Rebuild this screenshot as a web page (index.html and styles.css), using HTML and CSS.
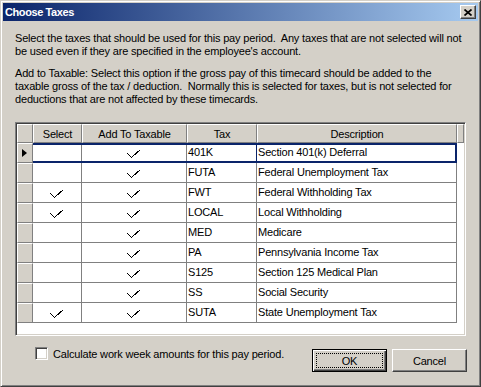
FILE: index.html
```html
<!DOCTYPE html>
<html lang="en">
<head>
    <meta charset="UTF-8">
    <title>Choose Taxes</title>
    <link rel="stylesheet" href="styles.css">
</head>
<body>
    <div class="window">
        <div class="titlebar">
            <span class="title">Choose Taxes</span>
            <span class="close">
                <svg width="8" height="7" viewBox="0 0 8 7"><path d="M0.5 0.5 L7.5 6.5 M7.5 0.5 L0.5 6.5" stroke="#000" stroke-width="1.7" fill="none"/></svg>
            </span>
        </div>
        <div class="content">
            <p class="intro">Select the taxes that should be used for this pay period.&nbsp; Any taxes that are not selected will not<br>be used even if they are specified in the employee's account.</p>
            <p class="intro second">Add to Taxable: Select this option if the gross pay of this timecard should be added to the<br>taxable gross of the tax / deduction.&nbsp; Normally this is selected for taxes, but is not selected for<br>deductions that are not affected by these timecards.</p>

            <div class="grid" id="grid">
                <div class="row head">
                    <div class="ind"></div>
                    <div class="hcell">Select</div>
                    <div class="hcell">Add To Taxable</div>
                    <div class="hcell">Tax</div>
                    <div class="hcell">Description</div>
                    <div class="hcell stub"></div>
                </div>
            </div>

            <div class="footer">
                <label class="option"><span class="box"></span>Calculate work week amounts for this pay period.</label>
                <div class="buttons">
                    <button class="btn default">OK</button>
                    <button class="btn">Cancel</button>
                </div>
            </div>
        </div>
    </div>

    <script>
        const taxes = [
            ['401K', 'Section 401(k) Deferral', false, true],
            ['FUTA', 'Federal Unemployment Tax', false, true],
            ['FWT', 'Federal Withholding Tax', true, true],
            ['LOCAL', 'Local Withholding', true, true],
            ['MED', 'Medicare', false, true],
            ['PA', 'Pennsylvania Income Tax', false, true],
            ['S125', 'Section 125 Medical Plan', false, true],
            ['SS', 'Social Security', false, true],
            ['SUTA', 'State Unemployment Tax', true, true]
        ];

        const check = '<svg width="14" height="9" viewBox="0 0 14 9" shape-rendering="crispEdges"><polyline points="0.5,4.5 4.5,8.5 13.5,0.5" fill="none" stroke="#000" stroke-width="1"/></svg>';

        let html = '';
        taxes.forEach((t, i) => {
            html += `<div class="row${i === 0 ? ' current' : ''}">
                        <div class="ind"></div>
                        <div class="cell mark">${t[2] ? check : ''}</div>
                        <div class="cell mark">${t[3] ? check : ''}</div>
                        <div class="cell code">${t[0]}</div>
                        <div class="cell">${t[1]}</div>
                        <div class="rest"></div>
                     </div>`;
        });
        document.getElementById('grid').insertAdjacentHTML('beforeend', html);
    </script>
</body>
</html>
```

FILE: styles.css
```css
body {
    margin: 0;
    font-family: "Liberation Sans", Arial, sans-serif;
    font-size: 11px;
    letter-spacing: -0.18px;
    color: #000;
}

.window {
    width: 481px;
    height: 387px;
    box-sizing: border-box;
    background-color: #d4d0c8;
    border: 1px solid;
    border-color: #d4d0c8 #404040 #404040 #d4d0c8;
    box-shadow: inset 1px 1px #fff, inset -1px -1px #808080;
    padding: 2px;
}

.titlebar {
    height: 18px;
    display: flex;
    align-items: center;
    justify-content: space-between;
    padding: 0 2px;
    background: linear-gradient(to right, #0a246a, #a6caf0);
}

.title {
    color: #fff;
    font-weight: bold;
    letter-spacing: -0.4px;
}

.close {
    width: 16px;
    height: 14px;
    box-sizing: border-box;
    display: flex;
    align-items: center;
    justify-content: center;
    background-color: #d4d0c8;
    border: 1px solid;
    border-color: #fff #404040 #404040 #fff;
    box-shadow: inset -1px -1px #808080;
}

.content {
    padding: 0 11px 0 12px;
}

.intro {
    margin: 11px 0 0;
    line-height: 13px;
    white-space: nowrap;
}

.intro.second {
    margin-top: 9px;
}

/* grid */

.grid {
    width: 451px;
    height: 214px;
    box-sizing: border-box;
    margin-top: 16px;
    padding: 1px;
    background-color: #fff;
    border: 1px solid;
    border-color: #808080 #fff #fff #808080;
    box-shadow: inset 1px 1px #404040, inset -1px -1px #d4d0c8;
}

.row {
    display: grid;
    grid-template-columns: 16px 49px 105px 70px 200px 1fr;
    height: 20px;
}

.row.head {
    height: 19px;
}

.ind, .hcell {
    box-sizing: border-box;
    background-color: #d4d0c8;
    border: 1px solid;
    border-color: #fff #808080 #808080 #fff;
}

.hcell {
    display: flex;
    align-items: center;
    justify-content: center;
}

.cell {
    box-sizing: border-box;
    display: flex;
    align-items: center;
    padding: 0 0 2px 1px;
    border-right: 1px solid #808080;
    border-bottom: 1px solid #808080;
    white-space: nowrap;
    overflow: hidden;
}

.cell.mark {
    justify-content: center;
    padding: 1px 0 0;
}

.row.current {
    position: relative;
}

.row.current::after {
    content: "";
    position: absolute;
    left: 16px;
    top: 0;
    width: 424px;
    height: 20px;
    box-sizing: border-box;
    border: 2px solid #0a246a;
    border-left: none;
}

.row.current .code {
    border-right-color: #0a246a;
}

.row.current .ind {
    position: relative;
}

.row.current .ind::before {
    content: "";
    position: absolute;
    left: 4px;
    top: 5px;
    border-left: 5px solid #000;
    border-top: 4px solid transparent;
    border-bottom: 4px solid transparent;
}

/* footer */

.footer {
    display: flex;
    justify-content: space-between;
    align-items: flex-start;
    margin-top: 11px;
}

.option {
    display: flex;
    align-items: center;
    gap: 5px;
    margin-left: 20px;
    height: 13px;
}

.box {
    width: 13px;
    height: 13px;
    box-sizing: border-box;
    background-color: #fff;
    border: 1px solid;
    border-color: #808080 #fff #fff #808080;
    box-shadow: inset 1px 1px #404040, inset -1px -1px #d4d0c8;
}

.buttons {
    display: flex;
    gap: 5px;
    margin-top: 2px;
}

.btn {
    width: 75px;
    height: 23px;
    box-sizing: border-box;
    padding: 0;
    font-family: inherit;
    font-size: 11px;
    letter-spacing: inherit;
    color: #000;
    background-color: #d4d0c8;
    border: 1px solid;
    border-color: #fff #404040 #404040 #fff;
    box-shadow: inset -1px -1px #808080;
}

.btn.default {
    position: relative;
    border-color: #000;
    box-shadow: inset 1px 1px #fff, inset -1px -1px #404040, inset -2px -2px #808080;
}

.btn.default::after {
    content: "";
    position: absolute;
    left: 3px;
    top: 3px;
    right: 3px;
    bottom: 3px;
    border: 1px dotted #000;
}
```
